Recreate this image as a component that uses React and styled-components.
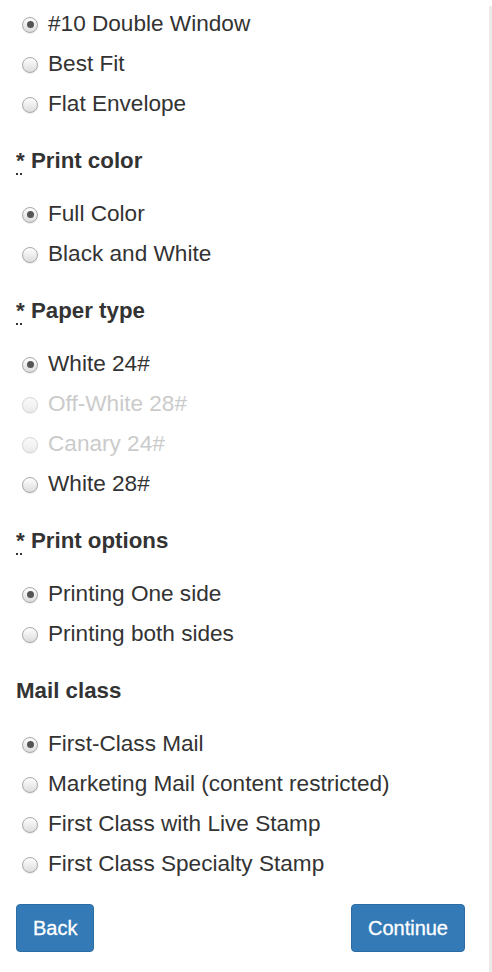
import React from 'react';
import styled, { createGlobalStyle } from 'styled-components';

const GlobalStyle = createGlobalStyle`
	html, body {
		margin: 0;
		padding: 0;
		background: #fff;
	}
	body {
		font-family: 'Liberation Sans', Arial, Helvetica, sans-serif;
		color: #333;
	}
`;

const sections = [
	{
		title: null,
		options: [
			{ label: '#10 Double Window', checked: true },
			{ label: 'Best Fit' },
			{ label: 'Flat Envelope' },
		],
	},
	{
		title: 'Print color',
		required: true,
		options: [{ label: 'Full Color', checked: true }, { label: 'Black and White' }],
	},
	{
		title: 'Paper type',
		required: true,
		options: [
			{ label: 'White 24#', checked: true },
			{ label: 'Off-White 28#', disabled: true },
			{ label: 'Canary 24#', disabled: true },
			{ label: 'White 28#' },
		],
	},
	{
		title: 'Print options',
		required: true,
		options: [{ label: 'Printing One side', checked: true }, { label: 'Printing both sides' }],
	},
	{
		title: 'Mail class',
		options: [
			{ label: 'First-Class Mail', checked: true },
			{ label: 'Marketing Mail (content restricted)' },
			{ label: 'First Class with Live Stamp' },
			{ label: 'First Class Specialty Stamp' },
		],
	},
];

const App = () => {
	return (
		<Page>
			<GlobalStyle />
			<Form onSubmit={(e) => e.preventDefault()}>
				{sections.map((section, index) => (
					<Group key={index}>
						{section.title && (
							<Heading>
								{section.required && <Req title="required">*</Req>} {section.title}
							</Heading>
						)}
						{section.options.map((opt) => (
							<Option key={opt.label} $disabled={opt.disabled}>
								<Radio $checked={opt.checked} $disabled={opt.disabled} />
								{opt.label}
							</Option>
						))}
					</Group>
				))}
				<Actions>
					<Button type="button">Back</Button>
					<Button type="submit">Continue</Button>
				</Actions>
			</Form>
			<Track />
		</Page>
	);
};

const Page = styled.div`
	display: flex;
	min-height: 972px;
`;

const Form = styled.form`
	flex: 1;
	padding: 4px 24px 0 16px;
`;

const Track = styled.div`
	width: 3px;
	margin-top: 6px;
	background: #ebebeb;
`;

const Group = styled.div`
	& + & {
		margin-top: 20px;
	}
`;

const Heading = styled.h3`
	margin: 0 0 18px;
	height: 32px;
	line-height: 34px;
	font-size: 22.3px;
	font-weight: bold;
	color: #333;
`;

const Req = styled.abbr`
	text-decoration: underline dotted;
	text-underline-offset: 5px;
	text-decoration-thickness: 2px;
	cursor: help;
`;

const Option = styled.label`
	display: flex;
	align-items: center;
	height: 40px;
	font-size: 22.6px;
	color: ${(p) => (p.$disabled ? '#cbcbcb' : '#333')};
`;

const Radio = styled.span`
	box-sizing: border-box;
	display: flex;
	align-items: center;
	justify-content: center;
	width: 16px;
	height: 16px;
	margin: 1px 10px 0 6px;
	border-radius: 50%;
	border: 1px solid ${(p) => (p.$disabled ? '#d6d6d6' : '#a8a8a8')};
	background: ${(p) =>
		p.$disabled
			? 'linear-gradient(#fafafa, #ececec)'
			: 'linear-gradient(#ffffff, #dcdcdc)'};
	box-shadow: 0 1px 1px rgba(0, 0, 0, 0.08);
	&::after {
		content: '';
		display: ${(p) => (p.$checked ? 'block' : 'none')};
		width: 7px;
		height: 7px;
		border-radius: 50%;
		background: #555;
	}
`;

const Actions = styled.div`
	display: flex;
	justify-content: space-between;
	margin-top: 20px;
`;

const Button = styled.button`
	height: 48px;
	padding: 0 16px;
	font-family: 'Liberation Sans', Arial, Helvetica, sans-serif;
	font-size: 20px;
	color: #fff;
	background: #337ab7;
	border: 1px solid #2e6da4;
	border-radius: 4px;
	cursor: pointer;
	-webkit-text-stroke: 0.3px #fff;
`;

export default App;
